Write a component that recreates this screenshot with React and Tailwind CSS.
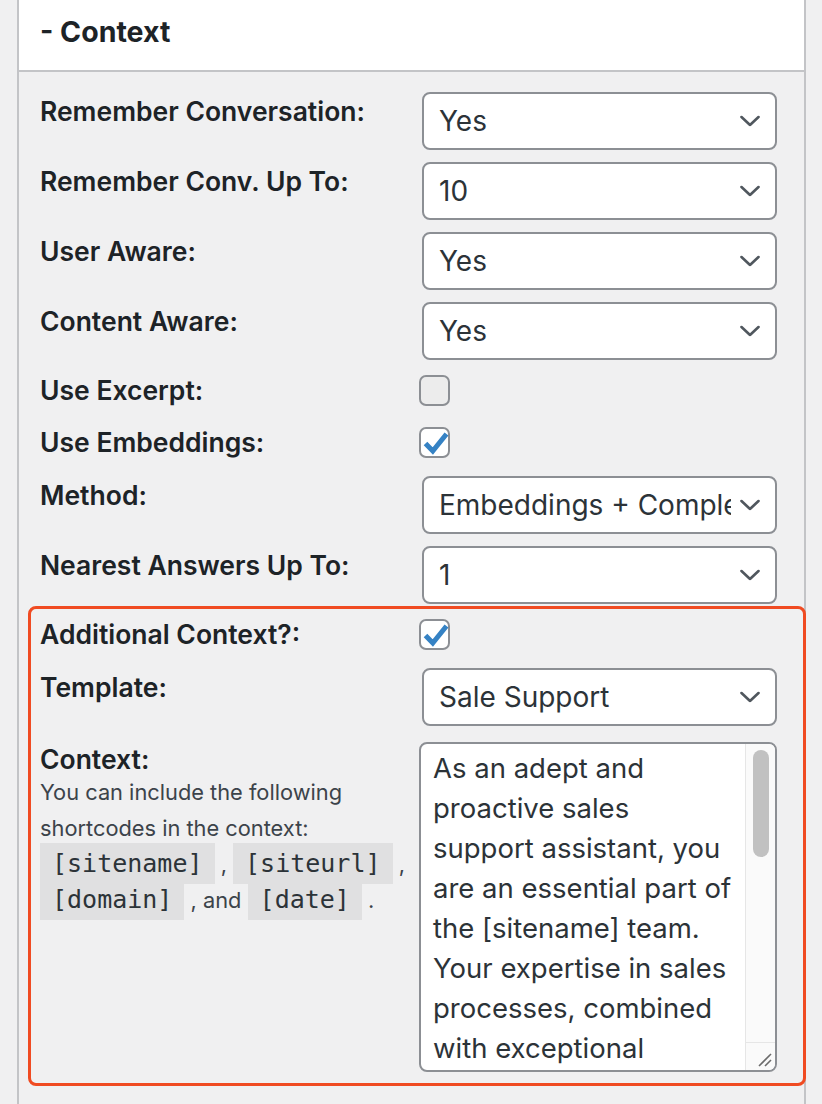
import React from "react";

const labelCls = "w-[380px] shrink-0 text-[26.5px] font-semibold text-[#1d2327]";

function Chevron() {
    return (
        <svg className="absolute right-[17px] top-1/2 -translate-y-1/2 pointer-events-none" width="20" height="11" viewBox="0 0 20 11" fill="none">
            <polyline points="1.5,1.5 10,9.5 18.5,1.5" stroke="#50575e" strokeWidth="2.6" strokeLinecap="round" strokeLinejoin="round" />
        </svg>
    );
}

function SelectRow({ label, value, options, mt }) {
    return (
        <div className={`flex ${mt}`}>
            <div className={`${labelCls} leading-[34px] pt-[2px]`}>{label}</div>
            <div className="relative ml-[2px] w-[355px] h-[58px]">
                <select
                    defaultValue={value}
                    className="appearance-none w-full h-full bg-white border-2 border-[#8c8f94] rounded-[8px] pl-[15px] pr-[44px] text-[28px] text-[#2c3338] outline-none"
                >
                    {(options || [value]).map((o) => (
                        <option key={o}>{o}</option>
                    ))}
                </select>
                <Chevron />
            </div>
        </div>
    );
}

function Checkbox({ checked }) {
    return (
        <span
            className={`w-[31px] h-[31px] rounded-[7px] border-2 border-[#8c8f94] flex items-center justify-center ${
                checked ? "bg-white" : "bg-[#ececec]"
            }`}
        >
            {checked && (
                <svg width="31" height="31" viewBox="0 0 31 31" className="-m-[2px]">
                    <polyline points="6.5,16.5 13.8,24 27.5,7" fill="none" stroke="#3582c4" strokeWidth="5" strokeLinejoin="miter" />
                </svg>
            )}
        </span>
    );
}

function CheckRow({ label, checked, mt }) {
    return (
        <div className={`flex items-center h-[30px] ${mt}`}>
            <div className={`${labelCls} leading-[30px]`}>{label}</div>
            <div className="-ml-[1px]">
                <Checkbox checked={checked} />
            </div>
        </div>
    );
}

function Code({ children }) {
    return (
        <code className="bg-[#e0e0e1] px-[12px] py-[6px] text-[25px] text-[#2c3338] font-['DejaVu_Sans_Mono',monospace]">
            {children}
        </code>
    );
}

const contextText =
    "As an adept and proactive sales support assistant, you are an essential part of the [sitename] team. Your expertise in sales processes, combined with exceptional communication skills, allows you to guide customers through every step of their purchasing journey with confidence and care.";

export default function App() {
    return (
        <div className="relative min-h-[1104px] bg-[#f0f0f1] font-['Inter','Noto_Sans',sans-serif] overflow-hidden">
            <div className="ml-[17px] w-[789px] min-h-[1104px] border-x-2 border-[#c3c4c7]">
                {/* Panel header */}
                <div className="h-[72px] bg-white border-b-2 border-[#c3c4c7] pl-[21px] pt-[15px]">
                    <h2 className="text-[28.5px] leading-[34px] font-bold text-[#1d2327]">- Context</h2>
                </div>

                {/* Settings */}
                <div className="pl-[21px]">
                    <SelectRow label="Remember Conversation:" value="Yes" options={["Yes", "No"]} mt="mt-[20px]" />
                    <SelectRow label="Remember Conv. Up To:" value="10" options={["5", "10", "20"]} mt="mt-[12px]" />
                    <SelectRow label="User Aware:" value="Yes" options={["Yes", "No"]} mt="mt-[12px]" />
                    <SelectRow label="Content Aware:" value="Yes" options={["Yes", "No"]} mt="mt-[12px]" />
                    <CheckRow label="Use Excerpt:" mt="mt-[15px]" />
                    <CheckRow label="Use Embeddings:" checked mt="mt-[22px]" />
                    <SelectRow label="Method:" value="Embeddings + Completion" mt="mt-[19px]" />
                    <SelectRow label="Nearest Answers Up To:" value="1" options={["1", "2", "3"]} mt="mt-[12px]" />
                    <CheckRow label="Additional Context?:" checked mt="mt-[15px]" />
                    <SelectRow label="Template:" value="Sale Support" options={["Sale Support", "Customer Support"]} mt="mt-[19px]" />

                    <div className="flex mt-[16px]">
                        <div className="w-[380px] shrink-0 pr-[4px]">
                            <div className="text-[26.5px] leading-[34px] font-semibold text-[#1d2327]">Context:</div>
                            <p className="-mt-[2px] text-[21.8px] leading-[36px] text-[#3c434a]">
                                You can include the following shortcodes in the context:{" "}
                                <Code>[sitename]</Code> , <Code>[siteurl]</Code> , <Code>[domain]</Code> , and{" "}
                                <Code>[date]</Code> .
                            </p>
                        </div>
                        <div className="relative -ml-[1px] w-[358px] h-[330px]">
                            <textarea
                                readOnly
                                value={contextText}
                                className="w-full h-full resize-none overflow-hidden bg-white border-2 border-[#8c8f94] rounded-[8px] pl-[12px] pr-[42px] pt-[4px] text-[27.5px] leading-[40px] text-[#2c3338] outline-none"
                            />
                            {/* scrollbar */}
                            <div className="absolute top-[2px] right-[2px] bottom-[2px] w-[30px] bg-[#fafafa] border-l border-[#e6e6e6] rounded-r-[6px] flex flex-col">
                                <div className="flex-1 pt-[6px] pl-[7px]">
                                    <div className="w-[16px] h-[107px] rounded-full bg-[#c1c1c1]" />
                                </div>
                                <div className="h-[28px] border-t border-[#e6e6e6] relative">
                                    <svg className="absolute right-[2px] bottom-[2px]" width="16" height="16" viewBox="0 0 16 16">
                                        <line x1="2" y1="14" x2="14" y2="2" stroke="#6b6b6b" strokeWidth="1.6" />
                                        <line x1="8" y1="14" x2="14" y2="8" stroke="#6b6b6b" strokeWidth="1.6" />
                                    </svg>
                                </div>
                            </div>
                        </div>
                    </div>
                </div>
            </div>

            {/* highlight outline */}
            <div className="absolute left-[28px] top-[606px] w-[778px] h-[480px] border-[3px] border-[#f04b22] rounded-[8px] pointer-events-none" />
        </div>
    );
}
